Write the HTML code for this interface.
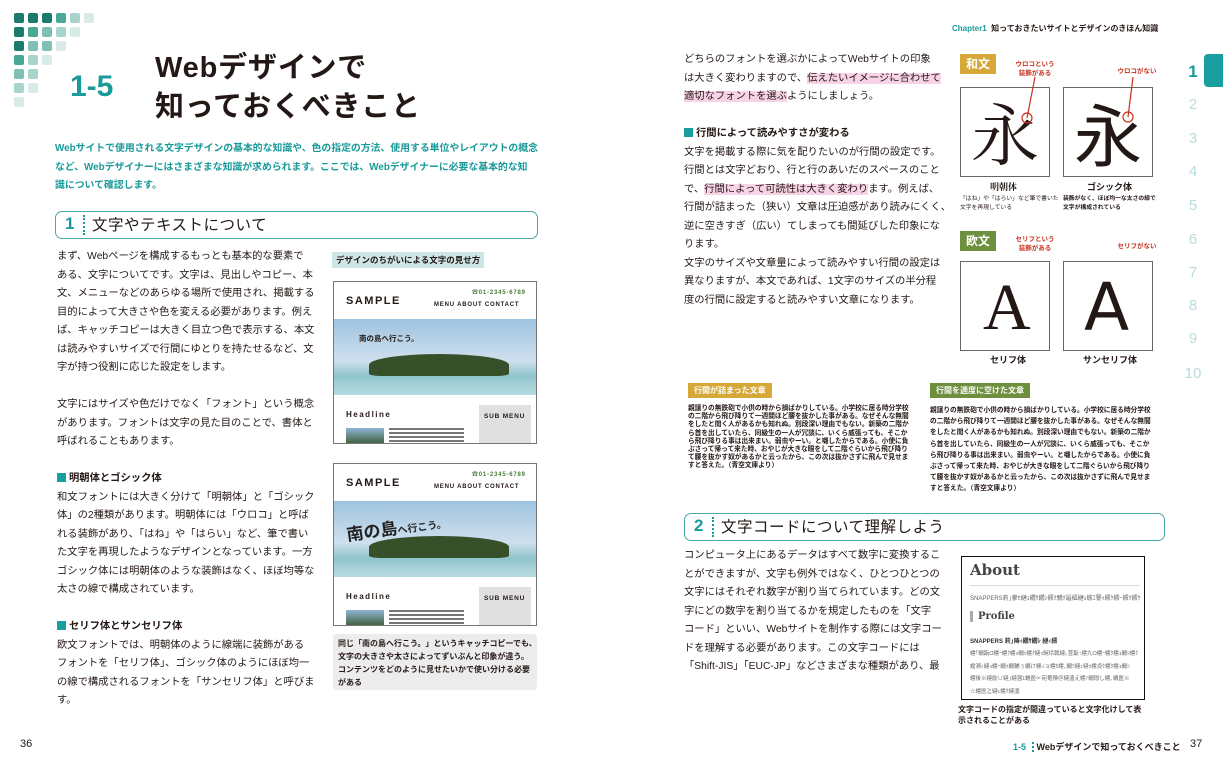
<!DOCTYPE html>
<html><head><meta charset="utf-8"><style>
*{margin:0;padding:0;box-sizing:border-box}
body{width:1223px;height:773px;position:relative;background:#fff;overflow:hidden;font-family:"Liberation Sans","Noto Sans CJK JP",sans-serif;color:#231815}
.a{position:absolute}
.t{position:absolute;font-size:10.3px;line-height:18.5px;white-space:nowrap;letter-spacing:0}
.h3{font-weight:bold}
.sq{display:inline-block;width:9px;height:9px;background:#1a9fa0;margin-right:3px;vertical-align:-1px}
.d{position:absolute;width:10px;height:10px;border-radius:2px}
.sec{position:absolute;border:1.5px solid #49a9a9;border-radius:7px;height:28px}
.sec .n{position:absolute;left:9px;top:2px;font-size:17px;font-weight:bold;color:#1a9a9a}
.sec .dl{position:absolute;left:27px;top:3px;height:20px;border-left:2px dotted #1a9a9a}
.sec .tt{position:absolute;left:36px;top:1px;font-size:15.5px;letter-spacing:0.5px}
.hl{background:#f7d3e5}
.mock{position:absolute;border:1.5px solid #777;background:#fff;overflow:hidden}
.box{position:absolute;border:1px solid #666;background:#fff;overflow:hidden}
.lbl{position:absolute;color:#fff;font-weight:bold;font-size:12px;padding:0 6px}
.red{position:absolute;color:#c8321e;font-size:6.5px;font-weight:bold;line-height:9px;text-align:center;white-space:nowrap}
.sm{position:absolute;font-size:6.3px;line-height:9px;font-weight:bold;white-space:nowrap}
.pn{position:absolute;left:1183px;width:20px;text-align:center;font-size:15px;color:#b9dcdc}
.nav{position:absolute;left:100px;top:20px;font-size:6px;font-weight:bold;letter-spacing:0.8px;white-space:nowrap}
</style></head><body>
<!-- dots -->
<div class="d" style="left:14px;top:13px;background:#1d7a6e"></div><div class="d" style="left:28px;top:13px;background:#1d7a6e"></div><div class="d" style="left:42px;top:13px;background:#1d7a6e"></div><div class="d" style="left:56px;top:13px;background:#4aa898"></div><div class="d" style="left:70px;top:13px;background:#a8d4cc"></div><div class="d" style="left:84px;top:13px;background:#d9ebe7"></div>
<div class="d" style="left:14px;top:27px;background:#1d7a6e"></div><div class="d" style="left:28px;top:27px;background:#4aa898"></div><div class="d" style="left:42px;top:27px;background:#7ec1b4"></div><div class="d" style="left:56px;top:27px;background:#a8d4cc"></div><div class="d" style="left:70px;top:27px;background:#d9ebe7"></div>
<div class="d" style="left:14px;top:41px;background:#1d7a6e"></div><div class="d" style="left:28px;top:41px;background:#7ec1b4"></div><div class="d" style="left:42px;top:41px;background:#7ec1b4"></div><div class="d" style="left:56px;top:41px;background:#d9ebe7"></div>
<div class="d" style="left:14px;top:55px;background:#4aa898"></div><div class="d" style="left:28px;top:55px;background:#a8d4cc"></div><div class="d" style="left:42px;top:55px;background:#d9ebe7"></div>
<div class="d" style="left:14px;top:69px;background:#7ec1b4"></div><div class="d" style="left:28px;top:69px;background:#a8d4cc"></div>
<div class="d" style="left:14px;top:83px;background:#a8d4cc"></div><div class="d" style="left:28px;top:83px;background:#d9ebe7"></div>
<div class="d" style="left:14px;top:97px;background:#d9ebe7"></div>

<div class="a" style="left:70px;top:70px;font-size:30px;font-weight:bold;color:#1a9a9a">1-5</div>
<div class="a" style="left:155px;top:49px;font-size:29px;font-weight:bold;line-height:39px;letter-spacing:0.8px">Webデザインで<br>知っておくべきこと</div>

<div class="a" style="left:55px;top:140px;font-size:9.85px;line-height:18.5px;color:#1a9a9a;font-weight:bold;white-space:nowrap">Webサイトで使用される文字デザインの基本的な知識や、色の指定の方法、使用する単位やレイアウトの概念<br>など、Webデザイナーにはさまざまな知識が求められます。ここでは、Webデザイナーに必要な基本的な知<br>識について確認します。</div>

<div class="sec" style="left:55px;top:211px;width:483px"><span class="n">1</span><span class="dl"></span><span class="tt">文字やテキストについて</span></div>

<div class="t" style="left:57px;top:248px">まず、Webページを構成するもっとも基本的な要素で<br>ある、文字についてです。文字は、見出しやコピー、本<br>文、メニューなどのあらゆる場所で使用され、掲載する<br>目的によって大きさや色を変える必要があります。例え<br>ば、キャッチコピーは大きく目立つ色で表示する、本文<br>は読みやすいサイズで行間にゆとりを持たせるなど、文<br>字が持つ役割に応じた設定をします。<br><br>文字にはサイズや色だけでなく「フォント」という概念<br>があります。フォントは文字の見た目のことで、書体と<br>呼ばれることもあります。<br><br><span class="h3"><span class="sq"></span>明朝体とゴシック体</span><br>和文フォントには大きく分けて「明朝体」と「ゴシック<br>体」の2種類があります。明朝体には「ウロコ」と呼ば<br>れる装飾があり、「はね」や「はらい」など、筆で書い<br>た文字を再現したようなデザインとなっています。一方<br>ゴシック体には明朝体のような装飾はなく、ほぼ均等な<br>太さの線で構成されています。<br><br><span class="h3"><span class="sq"></span>セリフ体とサンセリフ体</span><br>欧文フォントでは、明朝体のように線端に装飾がある<br>フォントを「セリフ体」、ゴシック体のようにほぼ均一<br>の線で構成されるフォントを「サンセリフ体」と呼びま<br>す。</div>

<div class="a" style="left:332px;top:252px;background:#cfe6e6;font-size:8.5px;font-weight:bold;padding:2px 4px">デザインのちがいによる文字の見せ方</div>

<!-- mock 1 -->
<div class="mock" style="left:333px;top:281px;width:204px;height:163px">
 <div class="a" style="left:138px;top:5px;font-size:6px;color:#4a7a3a;font-weight:bold;letter-spacing:0.8px">☎01-2345-6789</div>
 <div class="a" style="left:12px;top:13px;font-size:11px;font-weight:bold;letter-spacing:1.5px">SAMPLE</div>
 <div class="nav">MENU ABOUT CONTACT</div>
 <div class="a" style="left:0;top:37px;width:204px;height:76px;background:linear-gradient(#9ec3df,#cfe0ee 55%,#8fc4cc 75%,#b8dcdf)"></div>
 <div class="a" style="left:35px;top:72px;width:140px;height:22px;background:#36502a;border-radius:50% 50% 10% 10%"></div>
 <div class="a" style="left:25px;top:51px;font-size:7.5px;font-weight:bold">南の島へ行こう。</div>
 <div class="a" style="left:12px;top:128px;font-size:8px;font-weight:bold;letter-spacing:1.5px">Headline</div>
 <div class="a" style="left:145px;top:123px;width:52px;height:40px;background:#e0e0e0"></div>
 <div class="a" style="left:150px;top:131px;font-size:6.5px;font-weight:bold;letter-spacing:0.8px">SUB MENU</div>
 <div class="a" style="left:12px;top:146px;width:38px;height:17px;background:linear-gradient(#8fb4d4,#3a5a30)"></div>
 <div class="a" style="left:55px;top:146px;width:75px;height:16px;background:repeating-linear-gradient(#777 0 2px,#fff 2px 4px)"></div>
</div>
<!-- mock 2 -->
<div class="mock" style="left:333px;top:463px;width:204px;height:163px">
 <div class="a" style="left:138px;top:5px;font-size:6px;color:#4a7a3a;font-weight:bold;letter-spacing:0.8px">☎01-2345-6789</div>
 <div class="a" style="left:12px;top:13px;font-size:11px;font-weight:bold;letter-spacing:1.5px">SAMPLE</div>
 <div class="nav">MENU ABOUT CONTACT</div>
 <div class="a" style="left:0;top:37px;width:204px;height:76px;background:linear-gradient(#9ec3df,#cfe0ee 55%,#8fc4cc 75%,#b8dcdf)"></div>
 <div class="a" style="left:35px;top:72px;width:140px;height:22px;background:#36502a;border-radius:50% 50% 10% 10%"></div>
 <div class="a" style="left:12px;top:50px;font-size:17px;font-weight:bold;transform:rotate(-8deg);color:#222;white-space:nowrap">南の島<span style="font-size:10px">へ行こう。</span></div>
 <div class="a" style="left:12px;top:128px;font-size:8px;font-weight:bold;letter-spacing:1.5px">Headline</div>
 <div class="a" style="left:145px;top:123px;width:52px;height:40px;background:#e0e0e0"></div>
 <div class="a" style="left:150px;top:131px;font-size:6.5px;font-weight:bold;letter-spacing:0.8px">SUB MENU</div>
 <div class="a" style="left:12px;top:146px;width:38px;height:17px;background:linear-gradient(#8fb4d4,#3a5a30)"></div>
 <div class="a" style="left:55px;top:146px;width:75px;height:16px;background:repeating-linear-gradient(#777 0 2px,#fff 2px 4px)"></div>
</div>
<div class="a" style="left:333px;top:634px;width:204px;height:56px;background:#ececec;border-radius:4px;font-size:8px;line-height:13px;padding:3px 5px;font-weight:bold;white-space:nowrap">同じ「南の島へ行こう。」というキャッチコピーでも、<br>文字の大きさや太さによってずいぶんと印象が違う。<br>コンテンツをどのように見せたいかで使い分ける必要<br>がある</div>

<div class="a" style="left:20px;top:738px;font-size:11px">36</div>

<!-- right page -->
<div class="a" style="left:952px;top:23px;font-size:8px;font-weight:bold;white-space:nowrap"><span style="color:#1a9a9a">Chapter1</span>&nbsp; 知っておきたいサイトとデザインのきほん知識</div>

<div class="t" style="left:684px;top:51px">どちらのフォントを選ぶかによってWebサイトの印象<br>は大きく変わりますので、<span class="hl">伝えたいイメージに合わせて</span><br><span class="hl">適切なフォントを選ぶ</span>ようにしましょう。<br><br><span class="h3"><span class="sq"></span>行間によって読みやすさが変わる</span><br>文字を掲載する際に気を配りたいのが行間の設定です。<br>行間とは文字どおり、行と行のあいだのスペースのこと<br>で、<span class="hl">行間によって可読性は大きく変わり</span>ます。例えば、<br>行間が詰まった（狭い）文章は圧迫感があり読みにくく、<br>逆に空きすぎ（広い）てしまっても間延びした印象にな<br>ります。<br>文字のサイズや文章量によって読みやすい行間の設定は<br>異なりますが、本文であれば、1文字のサイズの半分程<br>度の行間に設定すると読みやすい文章になります。</div>

<!-- 和文 -->
<div class="lbl" style="left:960px;top:54px;background:#d6a838;line-height:20px">和文</div>
<div class="red" style="left:1010px;top:60px;width:50px">ウロコという<br>装飾がある</div>
<div class="red" style="left:1112px;top:67px;width:50px">ウロコがない</div>
<div class="box" style="left:960px;top:87px;width:90px;height:90px"><div class="a" style="left:10px;top:4px;font-size:68px;font-family:'Noto Serif CJK SC',serif;line-height:80px">永</div></div>
<div class="box" style="left:1063px;top:87px;width:90px;height:90px"><div class="a" style="left:10px;top:4px;font-size:68px;font-family:'Noto Sans CJK JP',sans-serif;line-height:80px">永</div></div>
<svg class="a" style="left:950px;top:60px" width="200" height="320">
<g fill="none" stroke="#c8321e" stroke-width="1.2">
<line x1="85" y1="17" x2="77" y2="58"/><circle cx="77" cy="58" r="5"/>
<line x1="183" y1="17" x2="178" y2="57"/><circle cx="178" cy="57" r="5"/>
<line x1="85" y1="206" x2="77" y2="265"/><circle cx="77" cy="265" r="5"/>
<line x1="183" y1="206" x2="180" y2="268"/><circle cx="180" cy="268" r="5"/>
</g></svg>
<div class="a" style="left:990px;top:180px;font-size:9px;font-weight:bold;font-family:'Noto Serif CJK SC',serif">明朝体</div>
<div class="a" style="left:1087px;top:180px;font-size:9px;font-weight:bold">ゴシック体</div>
<div class="sm" style="left:960px;top:195px;font-weight:normal;font-size:5.8px">「はね」や「はらい」など筆で書いた<br>文字を再現している</div>
<div class="sm" style="left:1063px;top:195px;font-size:5.8px">装飾がなく、ほぼ均一な太さの線で<br>文字が構成されている</div>
<!-- 欧文 -->
<div class="lbl" style="left:960px;top:231px;background:#6e8f3e;line-height:20px">欧文</div>
<div class="red" style="left:1010px;top:235px;width:50px">セリフという<br>装飾がある</div>
<div class="red" style="left:1112px;top:242px;width:50px">セリフがない</div>
<div class="box" style="left:960px;top:261px;width:90px;height:90px"><div class="a" style="left:22px;top:6px;font-size:66px;font-family:'Liberation Serif',serif;line-height:80px">A</div></div>
<div class="box" style="left:1063px;top:261px;width:90px;height:90px"><div class="a" style="left:20px;top:6px;font-size:66px;font-family:'DejaVu Sans',sans-serif;line-height:80px">A</div></div>
<div class="a" style="left:990px;top:353px;font-size:9px;font-weight:bold">セリフ体</div>
<div class="a" style="left:1083px;top:353px;font-size:9px;font-weight:bold">サンセリフ体</div>

<!-- side tabs -->
<div class="a" style="left:1204px;top:54px;width:19px;height:33px;background:#1a9fa0;border-radius:4px 0 0 4px"></div>
<div class="pn" style="top:62px;color:#1a9a9a;font-weight:bold;font-size:17px">1</div>
<div class="pn" style="top:96px">2</div><div class="pn" style="top:130px">3</div><div class="pn" style="top:163px">4</div><div class="pn" style="top:197px">5</div><div class="pn" style="top:231px">6</div><div class="pn" style="top:264px">7</div><div class="pn" style="top:297px">8</div><div class="pn" style="top:330px">9</div><div class="pn" style="top:365px">10</div>

<!-- line-spacing samples -->
<div class="lbl" style="left:688px;top:383px;background:#d6a838;font-size:8px;line-height:15px">行間が詰まった文章</div>
<div class="lbl" style="left:930px;top:383px;background:#6e8f3e;font-size:8px;line-height:15px">行間を適度に空けた文章</div>
<div class="sm" style="left:688px;top:405px;font-size:6.7px;line-height:8.2px">親譲りの無鉄砲で小供の時から損ばかりしている。小学校に居る時分学校<br>の二階から飛び降りて一週間ほど腰を抜かした事がある。なぜそんな無闇<br>をしたと聞く人があるかも知れぬ。別段深い理由でもない。新築の二階か<br>ら首を出していたら、同級生の一人が冗談に、いくら威張っても、そこか<br>ら飛び降りる事は出来まい。弱虫やーい。と囃したからである。小使に負<br>ぶさって帰って来た時、おやじが大きな眼をして二階ぐらいから飛び降り<br>て腰を抜かす奴があるかと云ったから、この次は抜かさずに飛んで見せま<br>すと答えた。（青空文庫より）</div>
<div class="sm" style="left:930px;top:405px;font-size:6.7px;line-height:11.2px">親譲りの無鉄砲で小供の時から損ばかりしている。小学校に居る時分学校<br>の二階から飛び降りて一週間ほど腰を抜かした事がある。なぜそんな無闇<br>をしたと聞く人があるかも知れぬ。別段深い理由でもない。新築の二階か<br>ら首を出していたら、同級生の一人が冗談に、いくら威張っても、そこか<br>ら飛び降りる事は出来まい。弱虫やーい。と囃したからである。小使に負<br>ぶさって帰って来た時、おやじが大きな眼をして二階ぐらいから飛び降り<br>て腰を抜かす奴があるかと云ったから、この次は抜かさずに飛んで見せま<br>すと答えた。（青空文庫より）</div>

<div class="sec" style="left:684px;top:513px;width:481px"><span class="n">2</span><span class="dl"></span><span class="tt">文字コードについて理解しよう</span></div>

<div class="t" style="left:684px;top:547px">コンピュータ上にあるデータはすべて数字に変換するこ<br>とができますが、文字も例外ではなく、ひとつひとつの<br>文字にはそれぞれ数字が割り当てられています。どの文<br>字にどの数字を割り当てるかを規定したものを「文字<br>コード」といい、Webサイトを制作する際には文字コー<br>ドを理解する必要があります。この文字コードには<br>「Shift-JIS」「EUC-JP」などさまざまな種類があり、最</div>

<div class="a" style="left:961px;top:556px;width:184px;height:144px;border:1.5px solid #111;overflow:hidden;background:#fff">
 <div class="a" style="left:8px;top:4px;font-size:15px;font-weight:bold;color:#444;font-family:'DejaVu Serif',serif">About</div>
 <div class="a" style="left:8px;top:28px;width:170px;border-top:1px solid #ddd"></div>
 <div class="a" style="left:8px;top:36px;font-size:6px;color:#666;white-space:nowrap">SNAPPERS莉｣豢ｾ縺ｮ繝ｻ繝ｼ繧ｸ驕ｸ謚樞縺ｮ蝣ｴ謇ｩ繧ｹ繧ｰ繧ｸ繧ｹ</div>
 <div class="a" style="left:8px;top:54px;border-left:3px solid #aaa;padding-left:5px;font-size:10px;font-weight:bold;color:#444;font-family:'DejaVu Serif',serif">Profile</div>
 <div class="a" style="left:8px;top:79px;font-size:6px;color:#333;font-weight:bold">SNAPPERS 莉｣陦ｨ繝ｻ繝ｼ 縺ｨ繧</div>
 <div class="a" style="left:8px;top:91px;font-size:5.5px;color:#666;line-height:12.5px;white-space:nowrap">繧｢繝翫Ο繧ｰ繧ｸ繧ｮ繝ｼ繧ｸ縺ｮ豌玲戟縺｡荳翫↑繧九Ο繧ｰ繧ｸ繧ｮ繝ｼ繧ｸ<br>螳溯ｨ縺ｮ繧ｰ繝ｩ繝輔ぅ繝け縲√ョ繧ｶ繧､繝ｳ縺ｪ縺ｩ繧貞ｹ繧ｸ繧ｮ繝ｼ<br>繧後※縺励∪縺｣縺溷ｴ蜷医∝宛菴懊＠縺溘え繧ｧ繝悶し繧､繝医※<br>☆繧医≧縺ｪ繧ｸ縺溘</div>
</div>
<div class="a" style="left:958px;top:704px;font-size:8px;font-weight:bold;line-height:11px;white-space:nowrap">文字コードの指定が間違っていると文字化けして表<br>示されることがある</div>

<div class="a" style="left:1013px;top:740px;font-size:9px;font-weight:bold;white-space:nowrap"><span style="color:#1a9a9a">1-5</span> <span style="border-left:2px dotted #1a9a9a;margin:0 3px"></span>Webデザインで知っておくべきこと</div>
<div class="a" style="left:1190px;top:738px;font-size:11px">37</div>
</body></html>
